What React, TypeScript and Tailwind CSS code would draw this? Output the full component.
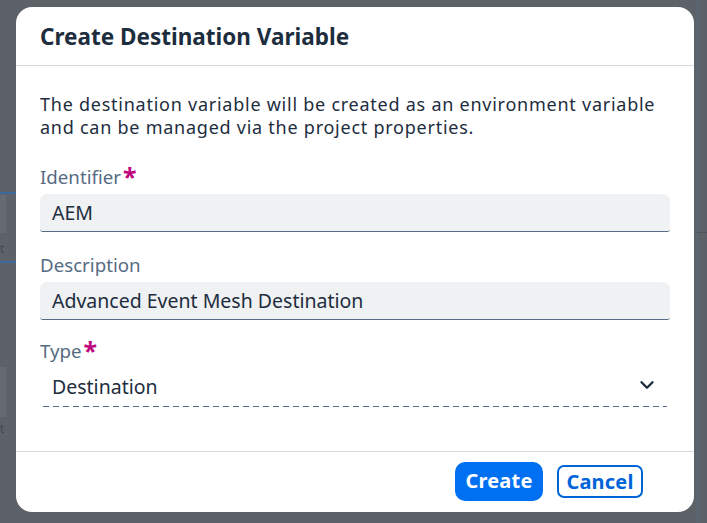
import { ChevronDown } from 'lucide-react';

const Label = ({ text, required }: { text: string; required?: boolean }) => (
    <div className="flex items-start text-[18.7px] leading-[24px] text-[#556b82]">
        <span>{text}</span>
        {required && <span className="ml-[2px] text-[25px] leading-[22px] font-bold text-[#c0067e]">*</span>}
    </div>
);

const Field = ({ value }: { value: string }) => (
    <div className="mt-[5px] h-[38px] flex items-center px-[12px] bg-[#eff1f2] rounded-t-[7px] rounded-b-[3px] border-b border-[#556b82] text-[19.5px] text-[#1d2d3e]">
        {value}
    </div>
);

export default function App() {
    return (
        <div
            className="relative h-[523px] w-[707px] overflow-hidden bg-[#5d6268]"
            style={{ fontFamily: '"Noto Sans", "Open Sans", sans-serif' }}
        >
            {/* dimmed page behind the dialog */}
            <div className="absolute left-0 top-[192px] w-[16px] h-[2px] bg-[#3b6a9c]" />
            <div className="absolute left-0 top-[195px] w-[6px] h-[38px] bg-[#666b72]" />
            <div className="absolute left-0 top-[240px] text-[12px] text-[#454a50]">t</div>
            <div className="absolute left-0 top-[261px] w-[16px] h-[2px] bg-[#3b6a9c]" />
            <div className="absolute left-0 top-[367px] w-[6px] h-[50px] bg-[#666b72]" />
            <div className="absolute left-0 top-[420px] text-[12px] text-[#454a50]">t</div>
            <div className="absolute right-[9px] top-0 w-[1px] h-[523px] bg-[#586a80]" />
            <div className="absolute right-0 top-[232px] w-[10px] h-[1px] bg-[#50555b]" />

            <div className="absolute left-[16px] top-[7px] w-[678px] h-[505px] bg-white rounded-[16px] flex flex-col overflow-hidden">
                <div className="h-[59px] flex items-center px-[24px] border-b border-[#d9d9d9] shrink-0">
                    <h1 className="text-[22.5px] font-bold text-[#1d2d3e] pt-[2px]">Create Destination Variable</h1>
                </div>

                <div className="flex-1 px-[24px] pt-[27px]">
                    <p className="text-[18px] leading-[23px] tracking-[0.75px] text-[#1d2d3e] max-w-[625px]">
                        The destination variable will be created as an environment variable and can be managed via the project properties.
                    </p>

                    <div className="mt-[26px]">
                        <Label text="Identifier" required />
                        <Field value="AEM" />
                    </div>

                    <div className="mt-[21px]">
                        <Label text="Description" />
                        <Field value="Advanced Event Mesh Destination" />
                    </div>

                    <div className="mt-[19px]">
                        <Label text="Type" required />
                        <div className="mt-[5px] mx-[3px] h-[38px] flex items-center justify-between pl-[9px] pr-[9px] text-[19.5px] text-[#1d2d3e]">
                            <span>Destination</span>
                            <ChevronDown size={22} strokeWidth={2.6} className="text-[#1d2d3e] -mt-[5px]" />
                        </div>
                        <div className="mx-[3px] h-[1px] bg-[linear-gradient(to_right,#556b82_60%,transparent_60%)] bg-[length:10px_1px] bg-repeat-x" />
                    </div>
                </div>

                <div className="h-[61px] shrink-0 border-t border-[#d9d9d9] flex items-center justify-end gap-[14px] pr-[51px] pb-[2px]">
                    <button className="h-[39px] w-[88px] rounded-[10px] bg-[#0070f2] text-white text-[20px] font-bold tracking-[0.2px]">
                        Create
                    </button>
                    <button className="h-[33px] w-[86px] rounded-[7px] border-2 border-[#0064d9] bg-white text-[#0064d9] text-[20px] font-bold tracking-[0.2px]">
                        Cancel
                    </button>
                </div>
            </div>
        </div>
    );
}
